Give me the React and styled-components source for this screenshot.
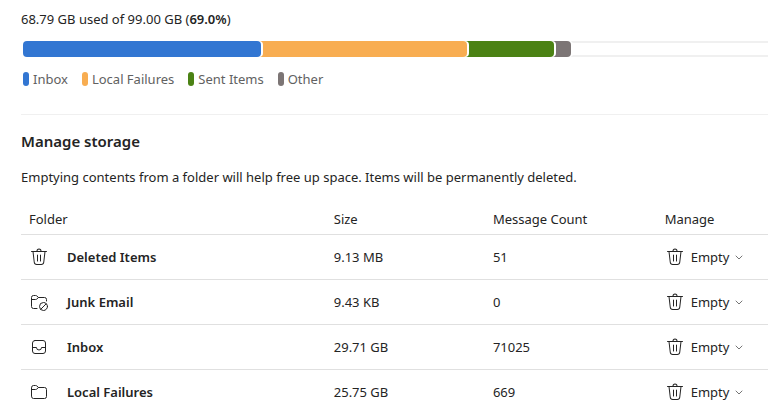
import React from 'react';
import styled, { createGlobalStyle } from 'styled-components';

const GlobalStyle = createGlobalStyle`
  * {
    box-sizing: border-box;
  }

  body {
    margin: 0;
    overflow: hidden;
    background: #ffffff;
    color: #242424;
    font-family: "Segoe UI", "Noto Sans", "Open Sans", sans-serif;
    font-size: 13px;
    line-height: 20px;
  }
`;

const Page = styled.main`
  padding: 9px 0 0 21px;
`;

const Usage = styled.p`
  margin: 0;
`;

const Strong = styled.strong`
  font-weight: 600;
`;

const Track = styled.div`
  display: flex;
  height: 16px;
  margin: 12px 0 0 2px;
  overflow: hidden;
  border-radius: 4px 0 0 4px;
  background: linear-gradient(#f0f0f0 2px, #ffffff 2px, #ffffff 14px, #f0f0f0 14px);
`;

const Segment = styled.div`
  position: relative;
  z-index: ${({ $order }) => $order};
  flex: none;
  margin-right: -4px;
  border-radius: 0 4px 4px 0;
  background: ${({ $color }) => $color};
  box-shadow: 2px 0 0 #ffffff;
`;

const Legend = styled.ul`
  display: flex;
  gap: 14px;
  margin: 12px 0 0;
  padding: 0 0 0 2px;
  list-style: none;
  color: #616161;
`;

const LegendItem = styled.li`
  display: flex;
  align-items: center;
  gap: 4px;
`;

const Swatch = styled.span`
  width: 6px;
  height: 14px;
  border-radius: 3px;
  background: ${({ $color }) => $color};
`;

const Divider = styled.hr`
  height: 1px;
  margin: 25px 0 15px;
  border: 0;
  background: #f0f0f0;
`;

const Title = styled.h2`
  margin: 0;
  font-size: 15px;
  font-weight: 600;
  line-height: 22px;
`;

const Description = styled.p`
  margin: 15px 0 17px;
`;

const Table = styled.table`
  width: 100%;
  table-layout: fixed;
  border-collapse: separate;
  border-spacing: 0;
`;

const HeadCell = styled.th`
  width: ${({ $width }) => $width};
  height: 31px;
  padding: 0 8px;
  border-bottom: 1px solid #e0e0e0;
  font-weight: 400;
  text-align: left;
`;

const Cell = styled.td`
  height: 45px;
  padding: 0 8px;
  border-bottom: 1px solid #e0e0e0;
`;

const FolderName = styled.div`
  display: flex;
  align-items: center;
  gap: 18px;
  font-weight: 600;
`;

const EmptyButton = styled.button`
  display: flex;
  align-items: center;
  gap: 6px;
  padding: 0;
  border: 0;
  background: none;
  color: inherit;
  font: inherit;
  cursor: pointer;
`;

const Icon = styled.svg`
  flex: none;
  width: 20px;
  height: 20px;
  fill: none;
  stroke: currentColor;
  stroke-linecap: round;
  stroke-linejoin: round;
`;

const Chevron = styled.svg`
  width: 8px;
  height: 6px;
  fill: none;
  stroke: #757575;
  stroke-linecap: round;
  stroke-linejoin: round;
`;

const DeleteIcon = () => (
  <Icon viewBox="0 0 20 20" aria-hidden="true">
    <path
      fill="currentColor"
      stroke="none"
      d="M8.5 4h3a1.5 1.5 0 0 0-3 0Zm-1 0a2.5 2.5 0 0 1 5 0h5a.5.5 0 0 1 0 1h-1.05l-1.2 10.34A3 3 0 0 1 12.27 18H7.73a3 3 0 0 1-2.98-2.66L3.55 5H2.5a.5.5 0 0 1 0-1h5ZM5.74 15.23A2 2 0 0 0 7.73 17h4.54a2 2 0 0 0 1.99-1.77L15.44 5H4.56l1.18 10.23ZM8.5 7.5c.28 0 .5.22.5.5v6a.5.5 0 0 1-1 0V8c0-.28.22-.5.5-.5ZM12 8a.5.5 0 0 0-1 0v6a.5.5 0 0 0 1 0V8Z"
    />
  </Icon>
);

const JunkIcon = () => (
  <Icon viewBox="0 0 20 20" aria-hidden="true">
    <path d="M8 16.5H4.5a2 2 0 0 1-2-2v-9a2 2 0 0 1 2-2h2.1a2 2 0 0 1 1.4.6l1.5 1.4h6a2 2 0 0 1 2 2V9" />
    <path d="M2.5 7.5h4.1A2 2 0 0 0 8 6.9l1.5-1.4" />
    <circle cx="14.5" cy="14.5" r="4" />
    <path d="m11.8 17.2 5.4-5.4" />
  </Icon>
);

const InboxIcon = () => (
  <Icon viewBox="0 0 20 20" aria-hidden="true">
    <rect x="3.5" y="3.5" width="13" height="13" rx="2.5" />
    <path d="M3.5 10.5h4a2.5 2.5 0 0 0 5 0h4" />
  </Icon>
);

const FolderIcon = () => (
  <Icon viewBox="0 0 20 20" aria-hidden="true">
    <path d="M2.5 5.5a2 2 0 0 1 2-2h2.1a2 2 0 0 1 1.4.6l1.5 1.4h6a2 2 0 0 1 2 2v7a2 2 0 0 1-2 2h-11a2 2 0 0 1-2-2z" />
    <path d="M2.5 7.5h4.1A2 2 0 0 0 8 6.9l1.5-1.4" />
  </Icon>
);

// share is the percentage of the track, including the overlap with the next segment
const usage = [
  { name: 'Inbox', color: '#3276d2', share: 32 },
  { name: 'Local Failures', color: '#f8ad51', share: 28.2 },
  { name: 'Sent Items', color: '#4b8214', share: 12.2 },
  { name: 'Other', color: '#7c7575', share: 2.8 },
];

const folders = [
  { name: 'Deleted Items', icon: DeleteIcon, size: '9.13 MB', count: 51 },
  { name: 'Junk Email', icon: JunkIcon, size: '9.43 KB', count: 0 },
  { name: 'Inbox', icon: InboxIcon, size: '29.71 GB', count: 71025 },
  { name: 'Local Failures', icon: FolderIcon, size: '25.75 GB', count: 669 },
];

const App = () => (
  <>
    <GlobalStyle />
    <Page>
      <Usage>
        68.79 GB used of 99.00 GB (<Strong>69.0%</Strong>)
      </Usage>
      <Track role="img" aria-label="Storage used">
        {usage.map(({ name, color, share }, i) => (
          <Segment key={name} $color={color} $order={usage.length - i} style={{ width: `${share}%` }} />
        ))}
      </Track>
      <Legend>
        {usage.map(({ name, color }) => (
          <LegendItem key={name}>
            <Swatch $color={color} />
            {name}
          </LegendItem>
        ))}
      </Legend>
      <Divider />
      <Title>Manage storage</Title>
      <Description>
        Emptying contents from a folder will help free up space. Items will be permanently deleted.
      </Description>
      <Table>
        <thead>
          <tr>
            <HeadCell $width="40.8%">Folder</HeadCell>
            <HeadCell $width="21.3%">Size</HeadCell>
            <HeadCell $width="23%">Message Count</HeadCell>
            <HeadCell>Manage</HeadCell>
          </tr>
        </thead>
        <tbody>
          {folders.map(({ name, icon: FolderGlyph, size, count }) => (
            <tr key={name}>
              <Cell>
                <FolderName>
                  <FolderGlyph />
                  {name}
                </FolderName>
              </Cell>
              <Cell>{size}</Cell>
              <Cell>{count}</Cell>
              <Cell>
                <EmptyButton type="button">
                  <DeleteIcon />
                  Empty
                  <Chevron viewBox="0 0 8 6" aria-hidden="true">
                    <path d="m1 2 3 3 3-3" />
                  </Chevron>
                </EmptyButton>
              </Cell>
            </tr>
          ))}
        </tbody>
      </Table>
    </Page>
  </>
);

export default App;
